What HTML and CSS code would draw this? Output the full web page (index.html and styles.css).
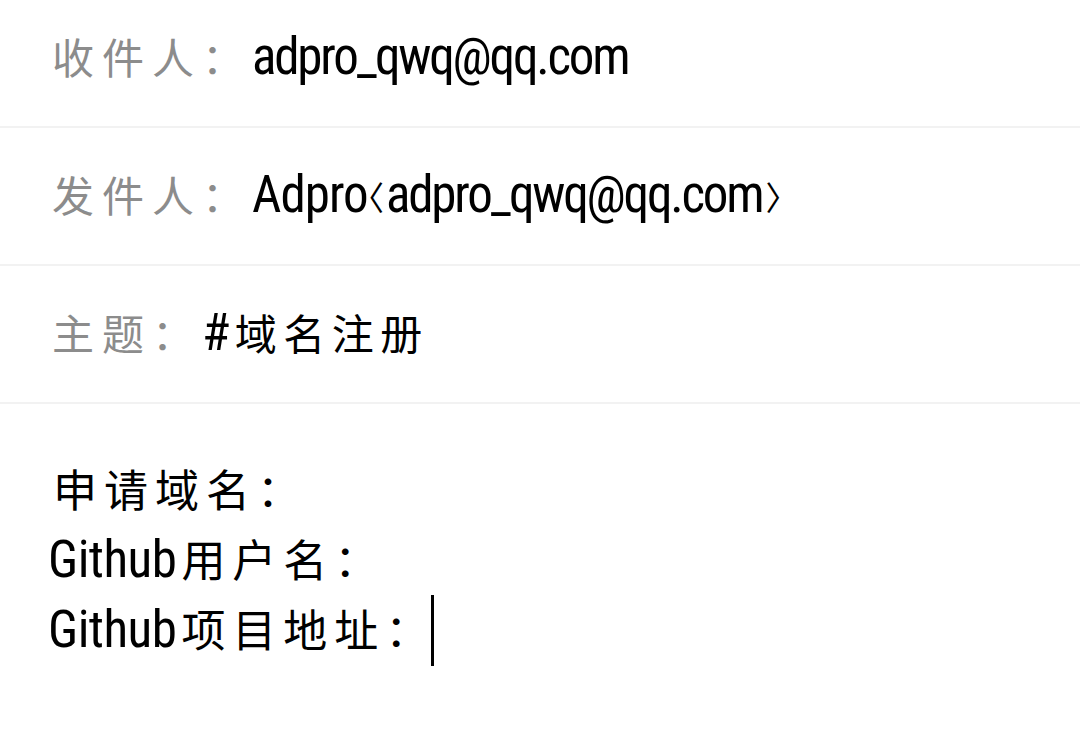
FILE: index.html
```html
<!DOCTYPE html>
<html lang="zh-CN">
<head>
<meta charset="utf-8">
<title>写邮件</title>
<link rel="stylesheet" href="styles.css">
</head>
<body>
<div class="compose">
  <div class="fields">
    <div class="row"><span class="label">收件人：</span><span class="value">adpro_qwq@qq.com</span></div>
    <div class="row"><span class="label">发件人：</span><span class="value"><span class="name">Adpro</span><span class="angle open">〈</span>adpro_qwq@qq.com<span class="angle close">〉</span></span></div>
    <div class="row"><span class="label">主题：</span><span class="value"><span class="hash">#</span><span class="cjk">域名注册</span></span></div>
  </div>
  <div class="body">
    <div class="line first"><span class="cjk">申请域名：</span></div>
    <div class="line">Github<span class="cjk after">用户名：</span></div>
    <div class="line">Github<span class="cjk after">项目地址：</span><span class="caret"></span></div>
  </div>
</div>
</body>
</html>
```
FILE: styles.css
```css
html, body {
  margin: 0;
  background: #ffffff;
}
.compose {
  width: 1080px;
  height: 756px;
  overflow: hidden;
  font-family: "Roboto Condensed", "Noto Sans CJK SC", sans-serif;
  font-size: 51px;
  color: #000000;
}
.fields {
  margin-top: -10px;
}
.row {
  box-sizing: border-box;
  height: 138px;
  padding: 31px 0 0 52px;
  border-bottom: 2px solid #f2f2f2;
  line-height: 70px;
  white-space: nowrap;
}
.label {
  font-family: "Noto Sans CJK SC", sans-serif;
  font-size: 42px;
  letter-spacing: 8px;
  color: #8c8c8c;
}
.value {
  letter-spacing: -2.2px;
}
.name {
  letter-spacing: -1px;
}
.angle {
  font-family: "Noto Sans CJK SC", sans-serif;
  font-feature-settings: "halt" 1;
  font-size: 33px;
  line-height: 0;
  letter-spacing: 0;
  vertical-align: 2px;
}
.angle.open {
  margin: 0 2px 0 0;
}
.angle.close {
  margin: 0 0 0 3px;
}
.hash {
  margin-right: 7px;
}
.cjk {
  font-family: "Noto Sans CJK SC", sans-serif;
  font-size: 42px;
  letter-spacing: 6.5px;
}
.body {
  padding: 49px 0 0 48px;
}
.line {
  line-height: 70px;
  height: 70px;
  white-space: nowrap;
  letter-spacing: -0.5px;
}
.line.first {
  padding-left: 5px;
}
.body .cjk {
  font-size: 44px;
  letter-spacing: 7px;
}
.body .cjk.after {
  margin-left: 5px;
}
.caret {
  display: inline-block;
  width: 3px;
  height: 71px;
  margin-left: -5px;
  background: #000000;
  vertical-align: -19px;
}
```
